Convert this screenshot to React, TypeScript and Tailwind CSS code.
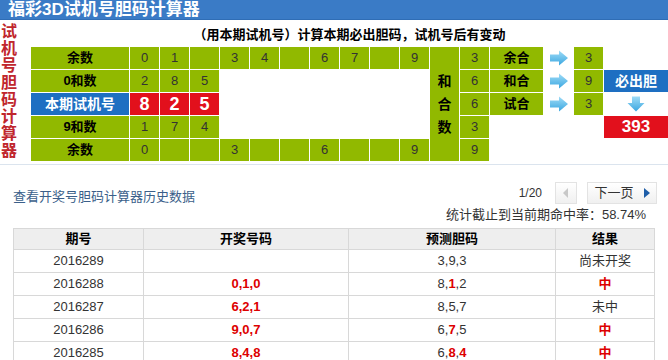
import React from 'react';

const FONT = { fontFamily: '"Liberation Sans", "Noto Sans CJK SC", sans-serif' };

const G = 'bg-[#91b900] flex items-center justify-center';
const NUM = 'text-[13px] text-[#333]';

const TOP_ROW = ['0', '1', '', '3', '4', '', '6', '7', '', '9'];
const BOT_ROW = ['0', '', '', '3', '', '', '6', '', '', '9'];

const HISTORY = [
  { no: '2016289', draw: '', pred: ['3', '9', '3'], hit: [], res: '尚未开奖' },
  { no: '2016288', draw: '0,1,0', pred: ['8', '1', '2'], hit: [1], res: '中' },
  { no: '2016287', draw: '6,2,1', pred: ['8', '5', '7'], hit: [], res: '未中' },
  { no: '2016286', draw: '9,0,7', pred: ['6', '7', '5'], hit: [1], res: '中' },
  { no: '2016285', draw: '8,4,8', pred: ['6', '8', '4'], hit: [1, 2], res: '中' },
];

function RightArrow() {
  return (
    <svg width="20" height="16" viewBox="0 0 20 16">
      <defs>
        <linearGradient id="ra" x1="0" y1="0" x2="0" y2="1">
          <stop offset="0" stopColor="#9fdcf7" />
          <stop offset="1" stopColor="#3aa6e0" />
        </linearGradient>
      </defs>
      <path d="M1 4.5 H10 V0.5 L19 8 L10 15.5 V11.5 H1 Z" fill="url(#ra)" />
    </svg>
  );
}

function DownArrow() {
  return (
    <svg width="18" height="16" viewBox="0 0 18 16">
      <defs>
        <linearGradient id="da" x1="0" y1="0" x2="0" y2="1">
          <stop offset="0" stopColor="#9fdcf7" />
          <stop offset="1" stopColor="#3aa6e0" />
        </linearGradient>
      </defs>
      <path d="M5 0.5 H13 V7 H17.5 L9 15.5 L0.5 7 H5 Z" fill="url(#da)" />
    </svg>
  );
}

function Calculator() {
  return (
    <div className="grid grid-cols-[98px_repeat(10,29px)_29px_29px_53px_29px_29px_64px] grid-rows-[repeat(5,22px)] gap-px">
      {/* row 1 */}
      <div className={`${G} text-[13px] font-bold text-black`}>余数</div>
      {TOP_ROW.map((n, i) => (
        <div key={`t${i}`} className={`${G} ${NUM}`}>{n}</div>
      ))}
      <div className={`${G} row-span-5 flex-col text-[14px] font-bold text-black leading-[23px] pt-[1px]`}>
        <span>和</span>
        <span>合</span>
        <span>数</span>
      </div>
      <div className={`${G} ${NUM}`}>3</div>
      <div className={`${G} text-[13px] font-bold text-black`}>余合</div>
      <div className="flex items-center justify-center"><RightArrow /></div>
      <div className={`${G} ${NUM}`}>3</div>
      <div />

      {/* row 2 */}
      <div className={`${G} text-[13px] font-bold text-black`}>0和数</div>
      {['2', '8', '5'].map((n, i) => (
        <div key={`a${i}`} className={`${G} ${NUM}`}>{n}</div>
      ))}
      <div className="col-span-7" />
      <div className={`${G} ${NUM}`}>6</div>
      <div className={`${G} text-[13px] font-bold text-black`}>和合</div>
      <div className="flex items-center justify-center"><RightArrow /></div>
      <div className={`${G} ${NUM}`}>9</div>
      <div className="bg-[#1e6fc2] flex items-center justify-center text-[14px] font-bold text-white">必出胆</div>

      {/* row 3 */}
      <div className="bg-[#1e6fc2] flex items-center justify-center text-[14px] font-bold text-white">本期试机号</div>
      {['8', '2', '5'].map((n, i) => (
        <div key={`r${i}`} className="bg-[#e2101c] flex items-center justify-center text-[18px] font-bold text-white">{n}</div>
      ))}
      <div className="col-span-7" />
      <div className={`${G} ${NUM}`}>6</div>
      <div className={`${G} text-[13px] font-bold text-black`}>试合</div>
      <div className="flex items-center justify-center"><RightArrow /></div>
      <div className={`${G} ${NUM}`}>3</div>
      <div className="flex items-center justify-center"><DownArrow /></div>

      {/* row 4 */}
      <div className={`${G} text-[13px] font-bold text-black`}>9和数</div>
      {['1', '7', '4'].map((n, i) => (
        <div key={`b${i}`} className={`${G} ${NUM}`}>{n}</div>
      ))}
      <div className="col-span-7" />
      <div className={`${G} ${NUM}`}>3</div>
      <div className="col-span-3" />
      <div className="bg-[#e2101c] flex items-center justify-center text-[17px] font-bold text-white">393</div>

      {/* row 5 */}
      <div className={`${G} text-[13px] font-bold text-black`}>余数</div>
      {BOT_ROW.map((n, i) => (
        <div key={`c${i}`} className={`${G} ${NUM}`}>{n}</div>
      ))}
      <div className={`${G} ${NUM}`}>9</div>
    </div>
  );
}

function Pred({ digits, hit }: { digits: string[]; hit: number[] }) {
  return (
    <>
      {digits.map((d, i) => (
        <React.Fragment key={i}>
          {i > 0 && ','}
          <span className={hit.includes(i) ? 'text-[#d00] font-bold' : ''}>{d}</span>
        </React.Fragment>
      ))}
    </>
  );
}

export default function App() {
  return (
    <div className="w-[668px] h-[360px] overflow-hidden bg-white" style={FONT}>
      {/* Title bar */}
      <div className="h-[20px] bg-[#3a7bc6] flex items-center pl-[8px] border-b border-[#2f6db5]">
        <span className="text-[17px] font-bold text-white leading-none">福彩3D试机号胆码计算器</span>
      </div>

      <div className="flex h-[145px] border-b border-[#dbe4ee]">
        {/* vertical title */}
        <div className="w-[31px] pl-[1px] pt-[3px] flex flex-col text-[16px] leading-[17px] font-bold text-[#c0262c]">
          {'试机号胆码计算器'.split('').map((c, i) => (
            <span key={i}>{c}</span>
          ))}
        </div>
        <div className="flex flex-col">
          <div className="h-[27px] flex items-center justify-center text-[13px] font-bold text-black pt-[3px]">
            （用本期试机号）计算本期必出胆码，试机号后有变动
          </div>
          <Calculator />
        </div>
      </div>

      {/* History header */}
      <div className="flex justify-between pl-[13px] pr-[13px] pt-[17px]">
        <div className="text-[13px] text-[#3b5f8a] pt-[5px]">查看开奖号胆码计算器历史数据</div>
        <div className="flex flex-col items-end">
          <div className="flex items-center h-[22px]">
            <span className="text-[12px] text-[#333] mr-[13px]">1/20</span>
            <div className="w-[22px] h-[22px] border border-[#e3e3e3] bg-gradient-to-b from-white to-[#f0f0f0] flex items-center justify-center mr-[10px]">
              <svg width="6" height="10" viewBox="0 0 6 10"><path d="M5 0 L0 5 L5 10 Z" fill="#c8c8c8" /></svg>
            </div>
            <div className="w-[70px] h-[22px] border border-[#e3e3e3] bg-gradient-to-b from-white to-[#f0f0f0] flex items-center justify-center gap-[10px] mr-[-2px]">
              <span className="text-[13px] text-[#333]">下一页</span>
              <svg width="6" height="10" viewBox="0 0 6 10"><path d="M0 0 L6 5 L0 10 Z" fill="#1f5ea8" /></svg>
            </div>
          </div>
          <div className="text-[13px] text-[#333] mt-[3px] mr-[9px] leading-[16px]">统计截止到当前期命中率：58.74%</div>
        </div>
      </div>

      {/* Table */}
      <table className="ml-[13px] mt-[5px] w-[641px] border-collapse text-[13px] text-[#333] table-fixed">
        <colgroup>
          <col className="w-[130px]" />
          <col className="w-[205px]" />
          <col className="w-[207px]" />
          <col className="w-[99px]" />
        </colgroup>
        <thead>
          <tr className="h-[20px] bg-[#eeeeee]">
            <th className="border border-[#d8d8d8] font-bold text-black">期号</th>
            <th className="border border-[#d8d8d8] font-bold text-black">开奖号码</th>
            <th className="border border-[#d8d8d8] font-bold text-black">预测胆码</th>
            <th className="border border-[#d8d8d8] font-bold text-black">结果</th>
          </tr>
        </thead>
        <tbody>
          {HISTORY.map(r => (
            <tr key={r.no} className="h-[23px]">
              <td className="border border-[#d8d8d8] text-center">{r.no}</td>
              <td className="border border-[#d8d8d8] text-center text-[#d00] font-bold">{r.draw}</td>
              <td className="border border-[#d8d8d8] text-center"><Pred digits={r.pred} hit={r.hit} /></td>
              <td className={`border border-[#d8d8d8] text-center ${r.res === '中' ? 'text-[#d00] font-bold' : ''}`}>{r.res}</td>
            </tr>
          ))}
        </tbody>
      </table>
    </div>
  );
}
